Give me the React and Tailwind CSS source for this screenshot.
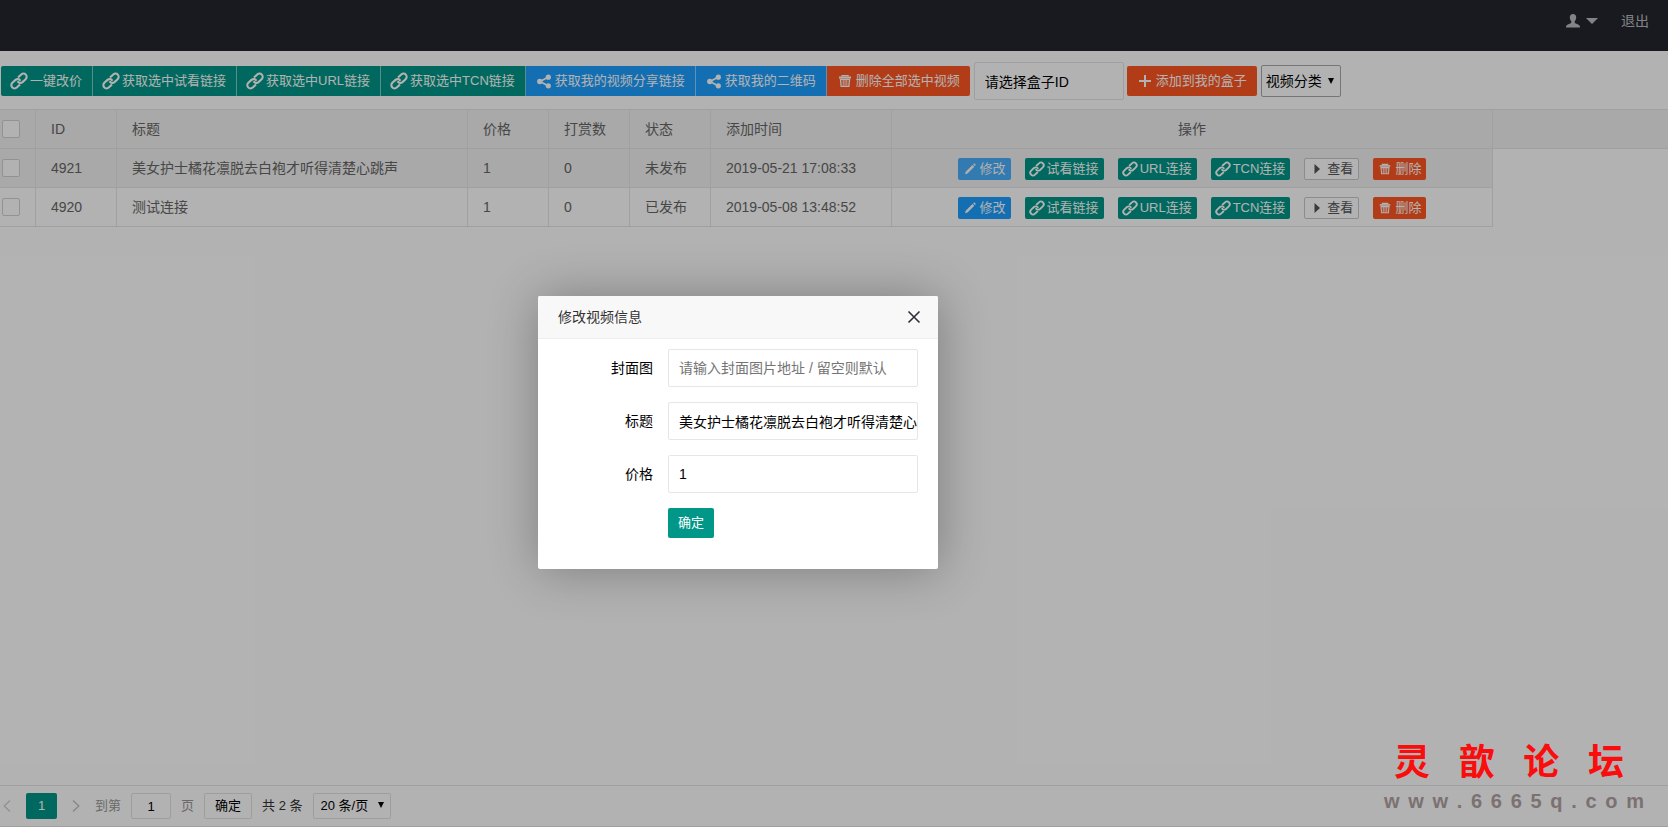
const rows = [
  { id: 4921, title: '美女护士橘花凛脱去白袍才听得清楚心跳声', price: 1, tips: 0, status: '未发布', time: '2019-05-21 17:08:33', active: true },
  { id: 4920, title: '测试连接', price: 1, tips: 0, status: '已发布', time: '2019-05-08 13:48:52', active: false },
];

function LinkIcon({ className }) {
  return (
    <svg viewBox="0 0 16 16" className={`${className} overflow-visible`} fill="none" stroke="currentColor" strokeWidth="2.1" aria-hidden="true">
      <g transform="rotate(-43 8 8)">
        <path d="M6.400 11.200H1.900a3.200 3.200 0 0 1 0-6.400h4.300a3.200 3.200 0 0 1 3 4" />
        <path d="M9.600 4.800h4.500a3.200 3.200 0 0 1 0 6.400H9.800a3.200 3.200 0 0 1-3-4" />
      </g>
    </svg>
  );
}

function ShareIcon({ className }) {
  return (
    <svg viewBox="0 0 16 16" className={className} fill="currentColor" aria-hidden="true">
      <path d="M4 8.500L12 4.300M4 8.500l8 4.300" fill="none" stroke="currentColor" strokeWidth="1.6" />
      <circle cx="3.800" cy="8.500" r="2.700" />
      <circle cx="12.300" cy="4.200" r="2.600" />
      <circle cx="12.300" cy="12.800" r="2.600" />
    </svg>
  );
}

function TrashIcon({ className }) {
  return (
    <svg viewBox="0 0 16 16" className={className} fill="none" stroke="currentColor" aria-hidden="true">
      <path d="M2 4.500h12" strokeWidth="1.800" />
      <path d="M5 3.600V2.600h6v1" strokeWidth="1.400" />
      <path d="M3.400 6.400h9.200l-.7 7H4.100z" strokeWidth="1.200" fill="currentColor" fillOpacity="0.200" />
      <path d="M6.300 7v5.500M8 7v5.500M9.700 7v5.500" strokeWidth="0.700" />
    </svg>
  );
}

function PencilIcon({ className }) {
  return (
    <svg viewBox="0 0 14 14" className={className} fill="currentColor" aria-hidden="true">
      <path d="M2 12.2l.7-2.5 6.8-6.8 1.8 1.8-6.8 6.8zM10.1 2.3l.6-.6c.3-.3.7-.3 1 0l.8.8c.3.3.3.7 0 1l-.6.6z" />
    </svg>
  );
}

function PlusIcon({ className }) {
  return (
    <svg viewBox="0 0 16 16" className={className} stroke="currentColor" strokeWidth="2" aria-hidden="true">
      <path d="M8 2v12M2 8h12" />
    </svg>
  );
}

function PlayIcon({ className }) {
  return (
    <svg viewBox="0 0 14 14" className={className} fill="currentColor" aria-hidden="true">
      <path d="M4.500 2l5.500 5-5.500 5z" />
    </svg>
  );
}

function UserIcon() {
  return (
    <svg viewBox="0 0 16 16" className="h-4 w-4" fill="currentColor" aria-hidden="true">
      <path d="M8 1c2 0 3.2 1.4 3.2 3.5 0 1.600-.6 2.800-1.500 3.600v1.500c.3.8 1.300 1.100 2.800 1.600 1.700.6 2.500 1.300 2.500 3.300H1c0-2 .8-2.700 2.500-3.300 1.500-.5 2.500-.8 2.800-1.600V8.100C5.400 7.300 4.800 6.100 4.800 4.500 4.800 2.400 6 1 8 1z" />
    </svg>
  );
}

function ArrowDown({ className }) {
  return (
    <svg viewBox="0 0 8 8" className={className} fill="currentColor" aria-hidden="true">
      <path d="M1 1h6L4 7z" />
    </svg>
  );
}

function ToolButton({ icon: Icon, color, children }) {
  return (
    <button type="button" className={`flex h-[30px] items-center gap-[3px] px-2.5 text-[13px] text-white ${color}`}>
      <Icon className="h-4 w-4" />
      {children}
    </button>
  );
}

function RowButton({ icon: Icon, color, children }) {
  return (
    <button type="button" className={`flex h-[22px] items-center gap-[3px] rounded-xs px-[5px] text-[13px] ${color}`}>
      <Icon className="h-3.5 w-3.5" />
      {children}
    </button>
  );
}

function Check({ label }) {
  return (
    <input
      type="checkbox"
      aria-label={label}
      className="ml-0.5 block h-[18px] w-[18px] appearance-none rounded-xs border border-[#d2d2d2] bg-white checked:bg-[#009688]"
    />
  );
}

function Field({ id, label, ...props }) {
  return (
    <div className="mb-[15px] flex">
      <label htmlFor={id} className="w-[130px] pr-[15px] text-right leading-[38px]">{label}</label>
      <input
        id={id}
        type="text"
        className="h-[38px] w-[250px] rounded-xs border border-[#e6e6e6] bg-white pl-2.5 placeholder:text-[#757575]"
        {...props}
      />
    </div>
  );
}

export default function App() {
  const cell = 'h-[39px] border-r border-b border-[#e6e6e6]';
  const link = 'bg-[#009688] text-white';

  return (
    <div className="relative flex min-h-screen flex-col bg-white font-['Liberation_Sans','Noto_Sans_CJK_SC',sans-serif] text-sm leading-5 text-black">
      <header className="flex h-[51px] items-start justify-end bg-[#23262e] pr-[19px] text-white/70">
        <button type="button" aria-label="用户" className="flex h-[41px] items-center gap-[5px]">
          <UserIcon />
          <svg viewBox="0 0 12 6" className="h-1.5 w-3" fill="currentColor" aria-hidden="true">
            <path d="M0 0h12L6 6z" />
          </svg>
        </button>
        <a href="#logout" className="ml-[23px] leading-[42px]">退出</a>
      </header>

      <div className="flex h-[59px] items-center border-b border-[#e6e6e6] pt-px pl-px">
        <div className="flex divide-x divide-white/50 overflow-hidden rounded-xs">
          <ToolButton icon={LinkIcon} color="bg-[#009688]">一键改价</ToolButton>
          <ToolButton icon={LinkIcon} color="bg-[#009688]">获取选中试看链接</ToolButton>
          <ToolButton icon={LinkIcon} color="bg-[#009688]">获取选中URL链接</ToolButton>
          <ToolButton icon={LinkIcon} color="bg-[#009688]">获取选中TCN链接</ToolButton>
          <ToolButton icon={ShareIcon} color="bg-[#1e9fff]">获取我的视频分享链接</ToolButton>
          <ToolButton icon={ShareIcon} color="bg-[#1e9fff]">获取我的二维码</ToolButton>
          <ToolButton icon={TrashIcon} color="bg-[#ff5722]">删除全部选中视频</ToolButton>
        </div>
        <input
          type="text"
          aria-label="盒子ID"
          defaultValue="请选择盒子ID"
          className="mr-[3px] ml-1 h-[38px] w-[150px] rounded-xs border border-[#e6e6e6] bg-white pl-2.5"
        />
        <ToolButton icon={PlusIcon} color="rounded-xs bg-[#ff5722]">添加到我的盒子</ToolButton>
        <div className="relative ml-1">
          <select aria-label="视频分类" className="h-8 w-20 appearance-none rounded-xs border border-[#a9a9a9] bg-white pl-1">
            <option>视频分类</option>
          </select>
          <ArrowDown className="pointer-events-none absolute top-3 right-1.5 h-2 w-2" />
        </div>
      </div>

      <main className="flex-1">
        <table className="w-full table-fixed border-separate border-spacing-0 text-left text-[#666]">
          <colgroup>
            <col className="w-[36px]" />
            <col className="w-[81px]" />
            <col className="w-[351px]" />
            <col className="w-[81px]" />
            <col className="w-[81px]" />
            <col className="w-[81px]" />
            <col className="w-[181px]" />
            <col className="w-[601px]" />
            <col />
          </colgroup>
          <thead>
            <tr className="bg-[#f2f2f2]">
              <th className={cell}><Check label="全选" /></th>
              {['ID', '标题', '价格', '打赏数', '状态', '添加时间'].map((name) => (
                <th key={name} className={`${cell} pl-[15px] font-normal`}>{name}</th>
              ))}
              <th className={`${cell} text-center font-normal`}>操作</th>
              <td className="border-b border-[#e6e6e6]"></td>
            </tr>
          </thead>
          <tbody>
            {rows.map((row) => {
              const body = row.active ? `${cell} bg-[#f2f2f2]` : cell;
              return (
                <tr key={row.id}>
                  <td className={body}><Check label={`选择 ${row.id}`} /></td>
                  {[row.id, row.title, row.price, row.tips, row.status, row.time].map((value, i) => (
                    <td key={i} className={`${body} truncate pl-[15px]`}>{value}</td>
                  ))}
                  <td className={body}>
                    <div className="flex justify-center gap-3.5 pt-px">
                      <RowButton icon={PencilIcon} color={row.active ? 'bg-[#1e9fff] text-white opacity-80' : 'bg-[#1e9fff] text-white'}>修改</RowButton>
                      <RowButton icon={LinkIcon} color={link}>试看链接</RowButton>
                      <RowButton icon={LinkIcon} color={link}>URL连接</RowButton>
                      <RowButton icon={LinkIcon} color={link}>TCN连接</RowButton>
                      <RowButton icon={PlayIcon} color="border border-[#c9c9c9] bg-white text-[#555]">查看</RowButton>
                      <RowButton icon={TrashIcon} color="bg-[#ff5722] text-white">删除</RowButton>
                    </div>
                  </td>
                  <td></td>
                </tr>
              );
            })}
          </tbody>
        </table>
      </main>

      <footer className="flex h-[42px] items-center border-y border-[#e6e6e6] text-[13px] text-[#999]">
        <button type="button" aria-label="上一页" className="w-[26px] pl-[3px] text-[#d2d2d2]">
          <svg viewBox="0 0 8 12" className="h-3 w-2" fill="none" stroke="currentColor" strokeWidth="1.4" aria-hidden="true">
            <path d="M7 0.500L1.200 6 7 11.500" />
          </svg>
        </button>
        <button type="button" className="h-[26px] w-[31px] rounded-xs bg-[#009688] text-white">1</button>
        <button type="button" aria-label="下一页" className="w-[38px] pl-[15px] text-[#c2c2c2]">
          <svg viewBox="0 0 8 12" className="h-3 w-2" fill="none" stroke="currentColor" strokeWidth="1.4" aria-hidden="true">
            <path d="M1 0.500L6.800 6 1 11.500" />
          </svg>
        </button>
        <label className="flex items-center gap-2.5">
          到第
          <input
            type="text"
            defaultValue="1"
            className="h-[26px] w-10 rounded-xs border border-[#e2e2e2] bg-white text-center text-black"
          />
          页
        </label>
        <button type="button" className="mx-2.5 h-[26px] w-12 rounded-xs border border-[#e2e2e2] bg-white text-black">确定</button>
        <span className="text-[#333]">共 2 条</span>
        <div className="relative ml-2.5 text-black">
          <select aria-label="每页条数" className="h-[26px] w-[78px] appearance-none rounded-xs border border-[#e2e2e2] bg-white pl-[7px]">
            <option>20 条/页</option>
          </select>
          <ArrowDown className="pointer-events-none absolute top-2 right-1.5 h-2 w-2" />
        </div>
      </footer>

      <div className="absolute inset-0 bg-black/30"></div>

      <div role="dialog" aria-labelledby="dialog-title" className="absolute top-[296px] left-[538px] h-[273px] w-[400px] rounded-xs bg-white shadow-[1px_1px_50px_rgba(0,0,0,0.3)]">
        <div className="flex h-[43px] items-center justify-between rounded-t-xs border-b border-[#eee] bg-[#f8f8f8] pr-[17px] pl-5">
          <h2 id="dialog-title" className="text-[#333]">修改视频信息</h2>
          <button type="button" aria-label="关闭" className="text-[#2e2d3c]">
            <svg viewBox="0 0 14 14" className="h-3.5 w-3.5" stroke="currentColor" strokeWidth="1.6" aria-hidden="true">
              <path d="M1.500 1.500l11 11M12.500 1.500l-11 11" />
            </svg>
          </button>
        </div>
        <form className="pt-2.5">
          <Field id="cover" label="封面图" placeholder="请输入封面图片地址 / 留空则默认" />
          <Field id="title" label="标题" defaultValue="美女护士橘花凛脱去白袍才听得清楚心跳声" />
          <Field id="price" label="价格" defaultValue="1" />
          <button type="button" className="ml-[130px] h-[30px] rounded-xs bg-[#009688] px-2.5 text-[13px] text-white">确定</button>
        </form>
      </div>

      <div className="pointer-events-none absolute right-6 bottom-2.5 w-[260px]">
        <div className="flex justify-between pr-5 pl-2.5 text-[36px] leading-[44px] font-bold text-[#fa0d0d]">
          {[...'灵歆论坛'].map((char) => <span key={char}>{char}</span>)}
        </div>
        <div className="flex justify-between font-['Liberation_Sans_Narrow','Liberation_Sans',sans-serif] text-[20px] leading-8 font-bold text-[#7b7171]">
          {[...'www.6665q.com'].map((char, i) => <span key={i}>{char}</span>)}
        </div>
      </div>
    </div>
  );
}
